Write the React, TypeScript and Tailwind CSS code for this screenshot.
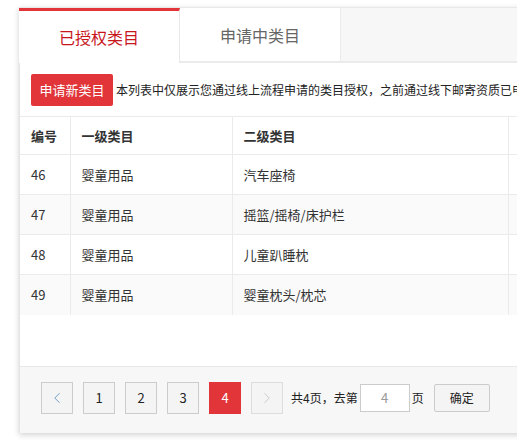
import { ChevronLeft, ChevronRight } from "lucide-react";

const rows = [
  { id: 46, first: "婴童用品", second: "汽车座椅" },
  { id: 47, first: "婴童用品", second: "摇篮/摇椅/床护栏" },
  { id: 48, first: "婴童用品", second: "儿童趴睡枕" },
  { id: 49, first: "婴童用品", second: "婴童枕头/枕芯" },
];

const font = { fontFamily: '"Noto Sans CJK SC", "Noto Sans", sans-serif' };

export default function App() {
  return (
    <div className="w-[517px] h-[442px] overflow-hidden bg-white pt-[7px] pl-[19px]" style={font}>
      <div className="w-[580px] shadow-[0_2px_6px_rgba(0,0,0,0.18)]">
        {/* tabs */}
        <div className="flex h-[56px] bg-[#f7f7f7] border-t border-[#e8e8e8]">
          <div className="w-[161px] bg-white border-r border-[#e8e8e8] border-t-[3px] border-t-[#e1353a] flex items-center justify-center text-[16px] text-[#c8161d]">
            已授权类目
          </div>
          <div className="w-[161px] bg-white border-r border-b-2 border-[#ebebeb] flex items-center justify-center text-[16px] text-[#666]">
            申请中类目
          </div>
          <div className="flex-1 border-b-2 border-[#ebebeb]" />
        </div>

        {/* content */}
        <div className="bg-white border-l border-[#e5e5e5]">
          <div className="flex items-center h-[53px] pl-[11px] gap-[3px] whitespace-nowrap overflow-hidden">
            <button className="h-[32px] w-[82px] shrink-0 rounded-[2px] bg-[#e1353a] text-white text-[13px]">
              申请新类目
            </button>
            <span className="text-[12px] text-[#222] overflow-hidden">
              本列表中仅展示您通过线上流程申请的类目授权，之前通过线下邮寄资质已申请的类目请联系客服查询
            </span>
          </div>

          <table className="w-full border-collapse text-[13px] text-[#333] table-fixed">
            <colgroup>
              <col className="w-[50px]" />
              <col className="w-[162px]" />
              <col className="w-[276px]" />
              <col />
            </colgroup>
            <thead>
              <tr className="h-[38px] border-y border-[#ebebeb]">
                <th className="text-left font-bold pl-[11px] border-r border-[#ebebeb]">编号</th>
                <th className="text-left font-bold pl-[11px] border-r border-[#ebebeb]">一级类目</th>
                <th className="text-left font-bold pl-[11px] border-r border-[#ebebeb]">二级类目</th>
                <th />
              </tr>
            </thead>
            <tbody>
              {rows.map((r, i) => (
                <tr
                  key={r.id}
                  className={`h-[40px] ${i < rows.length - 1 ? "border-b border-[#ebebeb]" : ""} ${i % 2 === 1 ? "bg-[#fafafa]" : "bg-white"}`}
                >
                  <td className="pl-[11px] border-r border-[#ebebeb]">{r.id}</td>
                  <td className="pl-[11px] border-r border-[#ebebeb]">{r.first}</td>
                  <td className="pl-[11px] border-r border-[#ebebeb]">{r.second}</td>
                  <td />
                </tr>
              ))}
            </tbody>
          </table>

          <div className="h-[51px]" />

          {/* pagination */}
          <div className="h-[67px] bg-[#f7f7f7] border-t border-[#e8e8e8] flex items-start pt-[15px] pl-[21px] text-[13px] text-[#222]">
            <div className="flex gap-[10px]">
              <button className="w-[32px] h-[32px] border border-[#ccc] bg-[#f4f4f4] flex items-center justify-center text-[#4a7fb5]">
                <ChevronLeft className="w-[18px] h-[18px]" strokeWidth={1} />
              </button>
              {[1, 2, 3].map((n) => (
                <button key={n} className="w-[32px] h-[32px] border border-[#ccc] bg-[#f4f4f4] flex items-center justify-center text-[#222]">
                  {n}
                </button>
              ))}
              <button className="w-[32px] h-[32px] bg-[#e1353a] flex items-center justify-center text-white">4</button>
              <button className="w-[32px] h-[32px] border border-[#ddd] bg-[#f4f4f4] flex items-center justify-center text-[#bbb]">
                <ChevronRight className="w-[18px] h-[18px]" strokeWidth={1} />
              </button>
            </div>
            <div className="flex items-center h-[32px] ml-[8px] text-[12px]">
              <span>共4页，去第</span>
              <div className="w-[50px] h-[28px] ml-[2px] border border-[#ccc] bg-white flex items-center justify-center text-[13px] text-[#999]">
                4
              </div>
              <span className="ml-[2px]">页</span>
              <button className="ml-[10px] w-[56px] h-[28px] border border-[#ccc] rounded-[2px] bg-[#f4f4f4] text-[12px] text-[#222]">
                确定
              </button>
            </div>
          </div>
        </div>
      </div>
    </div>
  );
}
